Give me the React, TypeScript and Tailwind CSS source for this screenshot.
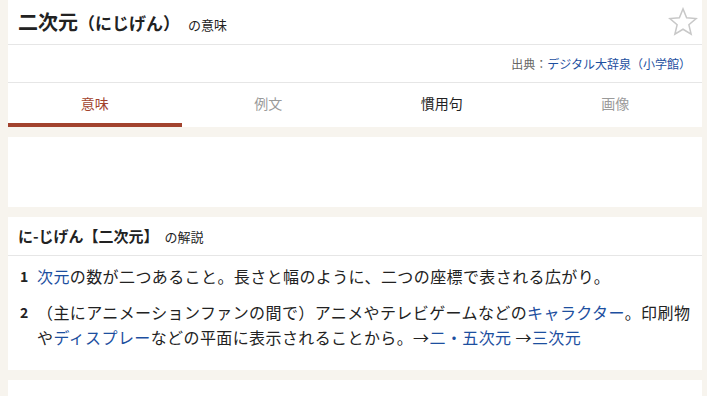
const jp = { fontFamily: '"Noto Sans CJK JP", "Noto Sans", sans-serif' };

function Star() {
  return (
    <svg width="30" height="30" viewBox="0 0 24 24" fill="none" stroke="#c8c8c8" strokeWidth="1.2" strokeLinejoin="miter">
      <polygon points="12,1.5 14.9,8.6 22.5,9.2 16.7,14.2 18.5,21.8 12,17.8 5.5,21.8 7.3,14.2 1.5,9.2 9.1,8.6" />
    </svg>
  );
}

const tabs = [
  { label: "意味", cls: "text-[#a2432e]", active: true },
  { label: "例文", cls: "text-[#9a9a9a]" },
  { label: "慣用句", cls: "text-[#222]" },
  { label: "画像", cls: "text-[#9a9a9a]" },
];

const Link = ({ children }: { children: React.ReactNode }) => (
  <span className="text-[#1d4f9f]">{children}</span>
);

export default function App() {
  return (
    <div className="min-h-screen bg-[#f7f4ee] pl-2 pr-[5px] text-[#222]" style={jp}>
      <section className="bg-white">
        <div className="flex h-[45px] items-center justify-between border-b border-[#e6e6e6] pl-[10px] pr-[4px]">
          <h1 className="flex items-baseline font-bold">
            <span className="text-[20px]">二次元</span>
            <span className="text-[17px]">（にじげん）</span>
            <span className="ml-[8px] text-[13px] font-normal">の意味</span>
          </h1>
          <Star />
        </div>
        <div className="flex h-[38px] items-center justify-end border-b border-[#e6e6e6] pr-[11px] text-[12px] text-[#666]">
          出典：<Link>デジタル大辞泉（小学館）</Link>
        </div>
        <nav className="grid h-[44px] grid-cols-4 text-[14px]">
          {tabs.map((t) => (
            <div key={t.label} className={`flex items-center justify-center border-b-4 ${t.active ? "border-[#a2432e]" : "border-transparent"} ${t.cls}`}>
              {t.label}
            </div>
          ))}
        </nav>
      </section>

      <div className="mt-[10px] h-[70px] bg-white" />

      <section className="mt-[10px] bg-white pb-[20px]">
        <div className="flex h-[39px] items-center border-b border-[#e6e6e6] pl-[10px]">
          <h2 className="flex items-baseline">
            <span className="text-[15px] font-bold">に-じげん【二次元】</span>
            <span className="ml-[6px] text-[13px]">の解説</span>
          </h2>
        </div>
        <ol className="pt-[8px] pl-[12px] pr-[4px] text-[16px] leading-[25px] tracking-[0.4px]">
          <li className="flex">
            <span className="w-[17px] shrink-0 text-[14px] font-bold">1</span>
            <p><Link>次元</Link>の数が二つあること。長さと幅のように、二つの座標で表される広がり。</p>
          </li>
          <li className="mt-[11px] flex">
            <span className="w-[17px] shrink-0 text-[14px] font-bold">2</span>
            <p>
              （主にアニメーションファンの間で）アニメやテレビゲームなどの<Link>キャラクター</Link>。印刷物や<Link>ディスプレー</Link>などの平面に表示されることから。→<Link>二・五次元</Link> →<Link>三次元</Link>
            </p>
          </li>
        </ol>
      </section>

      <div className="mt-[10px] h-[40px] bg-white" />
    </div>
  );
}
